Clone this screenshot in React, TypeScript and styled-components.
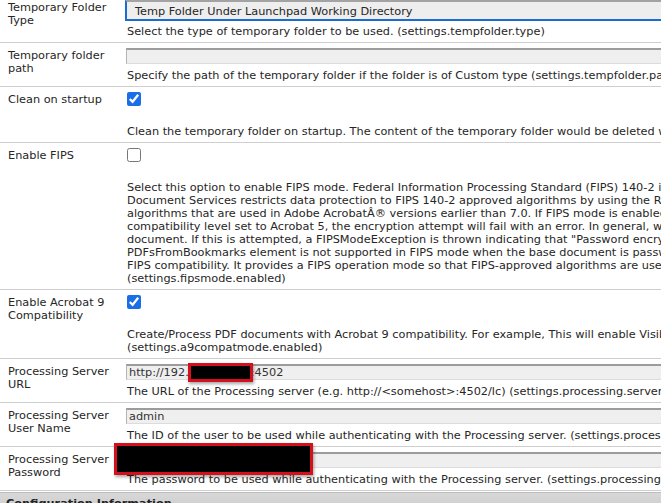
import React from "react";
import styled, { createGlobalStyle } from "styled-components";

const GlobalStyle = createGlobalStyle`
  html, body {
    margin: 0;
    padding: 0;
    background: #ffffff;
    overflow: hidden;
  }
  body {
    font-family: "DejaVu Sans", Verdana, sans-serif;
    font-size: 11.3px;
    color: #262626;
  }
`;

type Field =
  | { kind: "select"; value: string }
  | { kind: "text"; value: string; hiddenAfter?: string }
  | { kind: "check"; checked: boolean }
  | { kind: "password" };

interface Setting {
  label: string[];
  field: Field;
  help: string[];
}

const settings: Setting[] = [
  {
    label: ["Temporary Folder", "Type"],
    field: { kind: "select", value: "Temp Folder Under Launchpad Working Directory" },
    help: ["Select the type of temporary folder to be used. (settings.tempfolder.type)"],
  },
  {
    label: ["Temporary folder", "path"],
    field: { kind: "text", value: "" },
    help: [
      "Specify the path of the temporary folder if the folder is of Custom type (settings.tempfolder.path)",
    ],
  },
  {
    label: ["Clean on startup"],
    field: { kind: "check", checked: true },
    help: [
      "Clean the temporary folder on startup. The content of the temporary folder would be deleted when the server starts. (settings.tempfolder.cleanup)",
    ],
  },
  {
    label: ["Enable FIPS"],
    field: { kind: "check", checked: false },
    help: [
      "Select this option to enable FIPS mode. Federal Information Processing Standard (FIPS) 140-2 is a United States government security standard.",
      "Document Services restricts data protection to FIPS 140-2 approved algorithms by using the RSA BSAFE Crypto-C 2.1 encryption module.",
      "algorithms that are used in Adobe AcrobatÂ® versions earlier than 7.0. If FIPS mode is enabled and you use the Encrypt PDF service",
      "compatibility level set to Acrobat 5, the encryption attempt will fail with an error. In general, when FIPS mode is enabled,",
      "document. If this is attempted, a FIPSModeException is thrown indicating that \"Password encryption is not permitted in FIPS mode.\"",
      "PDFsFromBookmarks element is not supported in FIPS mode when the base document is password-encrypted.",
      "FIPS compatibility. It provides a FIPS operation mode so that FIPS-approved algorithms are used.",
      "(settings.fipsmode.enabled)",
    ],
  },
  {
    label: ["Enable Acrobat 9", "Compatibility"],
    field: { kind: "check", checked: true },
    help: [
      "Create/Process PDF documents with Acrobat 9 compatibility. For example, This will enable Visible signatures.",
      "(settings.a9compatmode.enabled)",
    ],
  },
  {
    label: ["Processing Server", "URL"],
    field: { kind: "text", value: "http://192.", hiddenAfter: ":4502" },
    help: [
      "The URL of the Processing server (e.g. http://<somehost>:4502/lc) (settings.processing.server.url)",
    ],
  },
  {
    label: ["Processing Server", "User Name"],
    field: { kind: "text", value: "admin" },
    help: [
      "The ID of the user to be used while authenticating with the Processing server. (settings.processing.server.username)",
    ],
  },
  {
    label: ["Processing Server", "Password"],
    field: { kind: "password" },
    help: [
      "The password to be used while authenticating with the Processing server. (settings.processing.server.password)",
    ],
  },
];

const renderField = (field: Field) => {
  switch (field.kind) {
    case "select":
      return <SelectBox>{field.value}</SelectBox>;
    case "text":
      return (
        <TextBox>
          {field.value}
          {field.hiddenAfter && (
            <>
              <Blank />
              {field.hiddenAfter}
            </>
          )}
        </TextBox>
      );
    case "password":
      return <TextBox />;
    case "check":
      return <Check type="checkbox" defaultChecked={field.checked} />;
  }
};

const App: React.FC = () => (
  <>
    <GlobalStyle />
    <Page>
      {settings.map((s) => (
        <Row key={s.label.join(" ")}>
          <Label>
            {s.label.map((l) => (
              <Line key={l}>{l}</Line>
            ))}
          </Label>
          <Value>
            {renderField(s.field)}
            <Help $afterCheck={s.field.kind === "check"}>
              {s.help.map((h) => (
                <Line key={h}>{h}</Line>
              ))}
            </Help>
            {/* black boxes painted over the screenshot to hide the host and password */}
            {s.field.kind === "text" && s.field.hiddenAfter && (
              <Redact $left={62} $top={-1} $w={65} $h={19} />
            )}
            {s.field.kind === "password" && <Redact $left={-12} $top={-9} $w={199} $h={32} />}
          </Value>
        </Row>
      ))}
      <SectionHeader>Configuration Information</SectionHeader>
    </Page>
  </>
);

const Page = styled.div`
  width: 1100px;
  margin-top: -5px;
`;

const Row = styled.div`
  display: grid;
  grid-template-columns: 126px 1fr;
  border-bottom: 1px solid #cfcfcf;
  padding: 5px 0 4px;
`;

const Label = styled.div`
  padding: 1px 0 0 8px;
`;

const Line = styled.div`
  white-space: nowrap;
  line-height: 13px;
`;

const Value = styled.div`
  position: relative;
  padding-left: 1px;
`;

const SelectBox = styled.div`
  box-sizing: border-box;
  height: 21px;
  margin: 0 0 4px -2px;
  padding: 2px 8px 0;
  background: #eeeeee;
  border-top: 2px solid #a3a3a3;
  border-left: 2px solid #1c6bd0;
  border-bottom: 2px solid #1c6bd0;
  line-height: 15px;
  white-space: nowrap;
`;

const TextBox = styled.div`
  box-sizing: border-box;
  height: 16px;
  margin: 0 0 5px -1px;
  padding: 0 2px;
  background: #efefef;
  border-top: 2px solid #9c9c9c;
  border-left: 1px solid #b5b5b5;
  border-bottom: 1px solid #dcdcdc;
  line-height: 13px;
  white-space: nowrap;
  color: #333333;
`;

const Blank = styled.span`
  display: inline-block;
  width: 62px;
`;

const Check = styled.input`
  display: block;
  width: 14px;
  height: 14px;
  margin: 0;
  accent-color: #1a6ee6;
`;

const Help = styled.div<{ $afterCheck: boolean }>`
  margin-top: ${({ $afterCheck }) => ($afterCheck ? "19px" : "0")};
`;

const Redact = styled.div<{ $left: number; $top: number; $w: number; $h: number }>`
  position: absolute;
  left: ${({ $left }) => $left}px;
  top: ${({ $top }) => $top}px;
  width: ${({ $w }) => $w}px;
  height: ${({ $h }) => $h}px;
  box-sizing: border-box;
  background: #000000;
  border: 3px solid #d3101c;
  box-shadow: 1px 2px 3px rgba(0, 0, 0, 0.35);
`;

const SectionHeader = styled.div`
  margin-top: 1px;
  padding: 4px 6px;
  background: linear-gradient(#d8d8d8, #c9c9c9);
  border-top: 1px solid #bdbdbd;
  font-weight: bold;
  color: #222222;
`;

export default App;
